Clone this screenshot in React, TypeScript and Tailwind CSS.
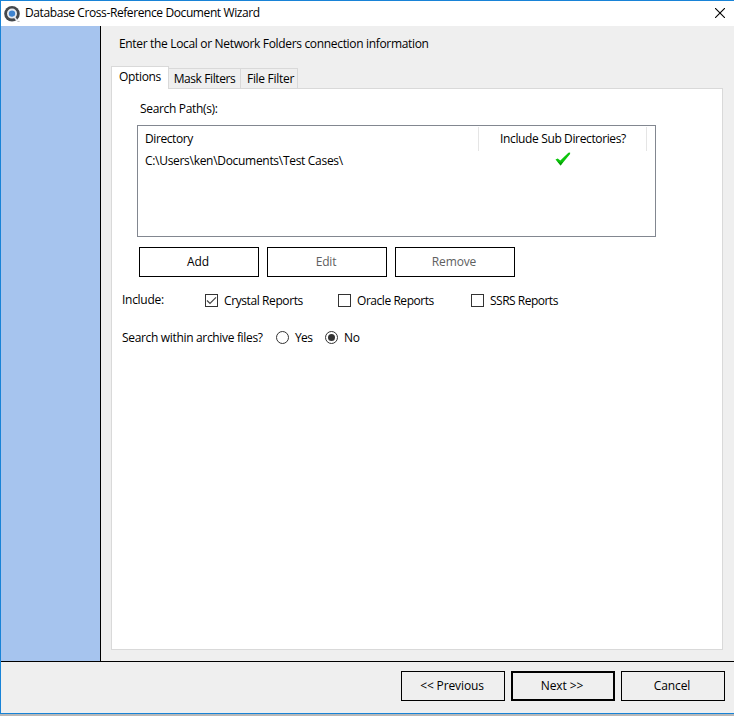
import React, { useState } from 'react';

const WizardIcon: React.FC = () => (
  <svg className="w-4 h-4" viewBox="0 0 16 16" fill="none">
    <circle cx="8" cy="7.8" r="7.8" fill="#44484c" />
    <circle cx="8" cy="7.6" r="4.1" fill="#3f84cf" stroke="#e6eaf0" strokeWidth="1.8" />
    <path d="M9.8 10.2l3 4" stroke="#e6eaf0" strokeWidth="1.5" />
    <path d="M13.4 15.4h2.2" stroke="#8a8d90" strokeWidth="0.6" />
  </svg>
);

const CloseIcon: React.FC = () => (
  <svg className="w-[10px] h-[10px]" viewBox="0 0 10 10" fill="none" stroke="#000" strokeWidth="1.1">
    <path d="M0 0l10 10M10 0L0 10" />
  </svg>
);

const GreenTick: React.FC = () => (
  <svg className="w-[16px] h-[14px]" viewBox="0 0 16 14">
    <path d="M0.5 7.4l2.2-.9 2.6 2.1L13.4.7l1.7-.3v1.6L5.6 13.6z" fill="#0cc40c" />
    <path d="M2.2 9.3l3.1 1.5 3-1.2-2.7 4z" fill="#079a07" />
  </svg>
);

const includeOptions = [
  { id: 'crystal', label: 'Crystal Reports', tracking: 'tracking-[-0.4px]' },
  { id: 'oracle', label: 'Oracle Reports', tracking: 'tracking-[-0.45px]' },
  { id: 'ssrs', label: 'SSRS Reports', tracking: 'tracking-[-0.5px]' },
];

const App: React.FC = () => {
  const [included, setIncluded] = useState<string[]>(['crystal']);
  const [archive, setArchive] = useState('No');

  const toggle = (id: string) =>
    setIncluded(included.includes(id) ? included.filter((i) => i !== id) : [...included, id]);

  const listButton = 'w-[120px] h-[30px] border border-black text-center pr-[2px] tracking-[-0.15px]';
  const navButton = 'w-[104px] h-[30px] border-black text-center pr-[2px] tracking-[-0.12px]';

  return (
    <div className="w-[734px] h-[716px] flex flex-col bg-[#b8b8b8] font-['Open_Sans','Noto_Sans',sans-serif] text-[12px] leading-4 text-black whitespace-nowrap">
      <div className="h-[714px] flex flex-col border-t border-l border-b border-[#1883d7] bg-[#efefef]">
        <header className="h-[25px] shrink-0 flex items-center bg-white pl-[3px] pr-[9px]">
          <WizardIcon />
          <h1 className="ml-[5px] -mt-px tracking-[-0.4px]">Database Cross-Reference Document Wizard</h1>
          <button className="ml-auto -mt-px" aria-label="Close"><CloseIcon /></button>
        </header>

        <div className="h-[635px] shrink-0 flex">
          <aside className="w-[100px] shrink-0 bg-[#a6c4ee] border-r border-black" />
          <main className="w-[622px] pl-[10px]">
            <p className="pt-[10px] pl-2 tracking-[-0.33px]">Enter the Local or Network Folders connection information</p>

            <nav className="mt-[14px] h-[23px] flex items-end">
              <button className="relative z-10 w-[58px] h-[23px] bg-white border border-b-0 border-[#d9d9d9] pb-[2px] tracking-[-0.35px]">Options</button>
              <button className="w-[72px] h-[21px] border-t border-r border-b border-[#d9d9d9] pt-px tracking-[-0.4px]">Mask Filters</button>
              <button className="w-[57px] h-[21px] border-t border-r border-b border-[#d9d9d9] pt-px pl-[3px] tracking-[-0.3px]">File Filter</button>
            </nav>

            <section className="-mt-px w-[612px] h-[562px] bg-white border border-[#d9d9d9]">
              <h2 className="mt-3 ml-7 tracking-[-0.33px]">Search Path(s):</h2>

              <div className="mt-2 ml-[25px] w-[519px] h-[112px] border border-[#828790] pt-px">
                <div className="flex h-6">
                  <div className="w-[341px] border-r border-[#e5e5e5] pl-[7px] pt-1 tracking-[-0.42px]">Directory</div>
                  <div className="w-[168px] border-r border-[#e5e5e5] pt-1 pl-px text-center tracking-[-0.37px]">Include Sub Directories?</div>
                </div>
                <div className="flex">
                  <div className="w-[341px] pl-[7px] pt-[2px] tracking-[-0.3px]">C:\Users\ken\Documents\Test Cases\</div>
                  <div className="w-[168px] flex justify-center pt-px"><GreenTick /></div>
                </div>
              </div>

              <div className="mt-[10px] ml-[27px] flex gap-2">
                <button className={listButton}>Add</button>
                <button className={`${listButton} text-[#606060]`}>Edit</button>
                <button className={`${listButton} text-[#606060]`}>Remove</button>
              </div>

              <div className="mt-[15px] ml-[10px] flex">
                <span className="w-[83px] tracking-[-0.28px]">Include:</span>
                {includeOptions.map(({ id, label, tracking }) => (
                  <button key={id} className="w-[133px] flex items-center" onClick={() => toggle(id)}>
                    <span className="w-[13px] h-[13px] border border-[#333] flex items-center justify-center">
                      {included.includes(id) && (
                        <svg className="w-[11px] h-[11px]" viewBox="0 0 11 11" fill="none" stroke="#444" strokeWidth="1.2">
                          <path d="M1 5.5l3 3L10 2.3" />
                        </svg>
                      )}
                    </span>
                    <span className={`ml-[6px] pt-px ${tracking}`}>{label}</span>
                  </button>
                ))}
              </div>

              <div className="mt-5 ml-[10px] flex">
                <span className="w-[154px] pt-px tracking-[-0.33px]">Search within archive files?</span>
                {['Yes', 'No'].map((value) => (
                  <button key={value} className="w-[49px] h-[17px] flex items-center" onClick={() => setArchive(value)}>
                    <span className="w-[13px] h-[13px] rounded-full border border-[#333] flex items-center justify-center">
                      {archive === value && <span className="w-[7px] h-[7px] rounded-full bg-[#333]" />}
                    </span>
                    <span className={`ml-[6px] pt-px ${value === 'Yes' ? 'tracking-[-0.6px]' : 'tracking-[-0.3px]'}`}>{value}</span>
                  </button>
                ))}
              </div>
            </section>
          </main>
        </div>

        <footer className="grow border-t border-black flex justify-end gap-[6px] pt-[9px] pr-[9px]">
          <button className={`${navButton} border`}>&lt;&lt; Previous</button>
          <button className={`${navButton} border-2`}>Next &gt;&gt;</button>
          <button className={`${navButton} border`}>Cancel</button>
        </footer>
      </div>
    </div>
  );
};

export default App;
